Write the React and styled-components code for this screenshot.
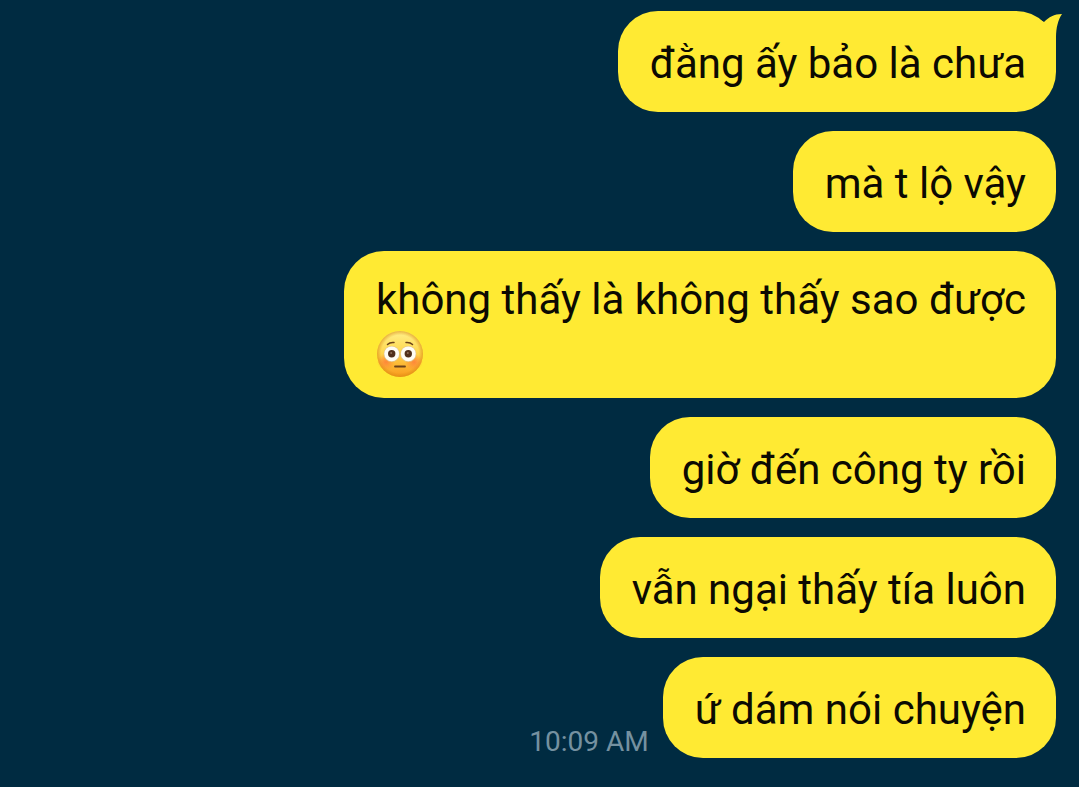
import styled, { createGlobalStyle } from 'styled-components';

const GlobalStyle = createGlobalStyle`
  body {
    margin: 0;
    background-color: #002b41;
    font-family: Roboto, 'Noto Sans', sans-serif;
  }
`;

const Chat = styled.main`
  display: flex;
  flex-direction: column;
  gap: 19px;
  min-height: 100vh;
  box-sizing: border-box;
  padding: 11px 23px 29px;
`;

const Row = styled.div`
  display: flex;
  justify-content: flex-end;
  align-items: flex-end;
  gap: 14px;
`;

const Bubble = styled.div`
  position: relative;
  display: flex;
  align-items: center;
  box-sizing: border-box;
  min-height: 101px;
  padding: 22px 30px 17px 32px;
  border-radius: 40px;
  background-color: #ffea33;
`;

const Text = styled.p`
  margin: 0;
  color: #0c0a02;
  font-size: 42px;
  line-height: 54px;
`;

const Time = styled.time`
  color: #7591a0;
  font-size: 28px;
  line-height: 32px;
`;

const Tail = styled.svg`
  position: absolute;
  top: 0;
  right: -6px;
  width: 40px;
  height: 50px;
`;

const Emoji = styled.svg`
  display: block;
  width: 48px;
  height: 54px;
`;

const BubbleTail = () => (
  <Tail viewBox="0 0 40 50" aria-hidden="true">
    <path
      d="M2 4 C10 5 17 8 22 11 C27 6 32 3 40 3 C36 9 34 17 34 26 V40 L20 46 L2 20Z"
      fill="#ffea33"
    />
  </Tail>
);

const FlushedFace = () => (
  <Emoji viewBox="0 0 48 54" role="img" aria-label="😳">
    <defs>
      <linearGradient id="skin" x1="0" y1="0" x2="0" y2="1">
        <stop offset="0" stopColor="#fff08a" />
        <stop offset="0.45" stopColor="#ffd84f" />
        <stop offset="1" stopColor="#f99a1c" />
      </linearGradient>
      <radialGradient id="rim">
        <stop offset="0.82" stopColor="#d98a12" stopOpacity="0" />
        <stop offset="1" stopColor="#d98a12" stopOpacity="0.6" />
      </radialGradient>
      <radialGradient id="blush">
        <stop offset="0" stopColor="#ff7038" stopOpacity="0.7" />
        <stop offset="1" stopColor="#ff7038" stopOpacity="0" />
      </radialGradient>
    </defs>
    <circle cx="24" cy="27" r="23" fill="url(#skin)" />
    <circle cx="24" cy="27" r="23" fill="url(#rim)" />
    <ellipse cx="10" cy="35" rx="9" ry="8" fill="url(#blush)" />
    <ellipse cx="38" cy="35" rx="9" ry="8" fill="url(#blush)" />
    <circle cx="15.7" cy="27" r="8" fill="#e3c58a" />
    <circle cx="32.3" cy="27" r="8" fill="#e3c58a" />
    <circle cx="15.7" cy="26.8" r="7.4" fill="#fffdf4" />
    <circle cx="32.3" cy="26.8" r="7.4" fill="#fffdf4" />
    <circle cx="15.7" cy="26.8" r="3.7" fill="#51301b" />
    <circle cx="32.3" cy="26.8" r="3.7" fill="#51301b" />
    <circle cx="15.2" cy="26" r="1" fill="#8d6c56" />
    <circle cx="31.8" cy="26" r="1" fill="#8d6c56" />
    <g fill="none" stroke="#6b421a" strokeWidth="1.5" strokeLinecap="round">
      <path d="M11.5 17.5 Q14 15 18 15.5" />
      <path d="M30 15.5 Q34 15 36.5 17.5" />
      <path d="M19 39.5 H29" strokeWidth="1.8" />
    </g>
  </Emoji>
);

const messages = [
  { text: 'đằng ấy bảo là chưa', hasTail: true },
  { text: 'mà t lộ vậy' },
  { text: 'không thấy là không thấy sao được', isFlushed: true },
  { text: 'giờ đến công ty rồi' },
  { text: 'vẫn ngại thấy tía luôn' },
  { text: 'ứ dám nói chuyện', time: '10:09 AM' },
];

const App = () => {
  return (
    <>
      <GlobalStyle />
      <Chat>
        {messages.map(({ text, time, hasTail, isFlushed }) => (
          <Row key={text}>
            {time && <Time>{time}</Time>}
            <Bubble>
              {hasTail && <BubbleTail />}
              <Text>
                {text}
                {isFlushed && <FlushedFace />}
              </Text>
            </Bubble>
          </Row>
        ))}
      </Chat>
    </>
  );
};

export default App;
